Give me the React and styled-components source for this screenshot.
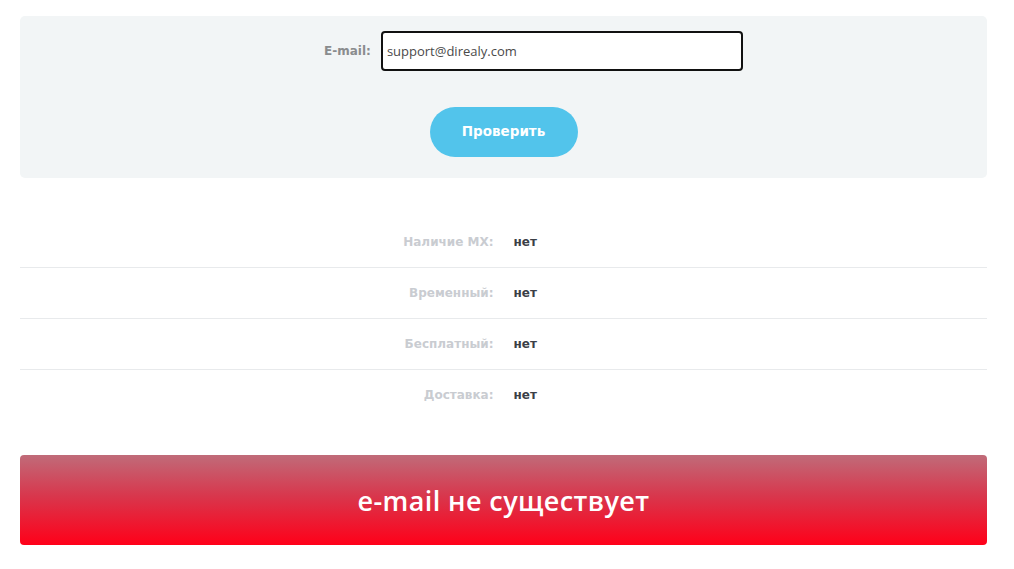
import React from "react";
import styled, { createGlobalStyle } from "styled-components";

const GlobalStyle = createGlobalStyle`
  html, body {
    margin: 0;
    padding: 0;
    background: #ffffff;
  }
  body {
    font-family: "Open Sans", "Liberation Sans", sans-serif;
  }
`;

const Page = styled.div`
  padding: 16px 27px 0 20px;
  display: flex;
  flex-direction: column;
`;

const CheckPanel = styled.form`
  background: #f2f5f6;
  border-radius: 5px;
  padding: 15px 0 21px;
  display: flex;
  flex-direction: column;
  align-items: center;
  gap: 36px;
`;

const Field = styled.label`
  display: flex;
  align-items: center;
  gap: 10px;
  margin-left: 60px;
  span {
    font-family: "DejaVu Sans", "Liberation Sans", sans-serif;
    font-size: 12px;
    font-weight: bold;
    color: #8a8c8e;
  }
  input {
    width: 362px;
    height: 40px;
    box-sizing: border-box;
    border: 2px solid #111;
    border-radius: 4px;
    background: #fff;
    padding: 0 4px;
    font-family: "Open Sans", "Liberation Sans", sans-serif;
    font-size: 13px;
    color: #4a4a4a;
    outline: none;
  }
`;

const CheckButton = styled.button`
  width: 148px;
  height: 50px;
  border: none;
  border-radius: 25px;
  background: #52c4eb;
  color: #fff;
  font-family: "DejaVu Sans", "Liberation Sans", sans-serif;
  font-size: 13.5px;
  font-weight: bold;
  padding: 0 0 2px;
  cursor: pointer;
`;

const Results = styled.div`
  margin-top: 39px;
  display: flex;
  flex-direction: column;
`;

const Row = styled.div`
  display: grid;
  grid-template-columns: 1fr 1fr;
  height: 50px;
  align-items: center;
  border-bottom: ${(p) => (p.last ? "none" : "1px solid #e8eaec")};
`;

const Label = styled.div`
  text-align: right;
  padding-right: 10px;
  font-family: "DejaVu Sans", "Liberation Sans", sans-serif;
  font-size: 12px;
  font-weight: bold;
  color: #c9ccd1;
`;

const Value = styled.div`
  padding-left: 10px;
  font-family: "DejaVu Sans", "Liberation Sans", sans-serif;
  font-size: 12px;
  font-weight: bold;
  color: #3b3f46;
`;

const Banner = styled.div`
  margin-top: 35px;
  height: 90px;
  border-radius: 4px;
  background: linear-gradient(to bottom, #c06b79 0%, #d8374d 45%, #ff0019 100%);
  display: flex;
  align-items: center;
  justify-content: center;
  color: #fff;
  font-family: "Open Sans", "Liberation Sans", sans-serif;
  font-size: 27px;
  font-weight: 600;
  letter-spacing: 0.4px;
`;

const rows = [
  { label: "Наличие MX:", value: "нет" },
  { label: "Временный:", value: "нет" },
  { label: "Бесплатный:", value: "нет" },
  { label: "Доставка:", value: "нет" },
];

const App = () => {
  return (
    <Page>
      <GlobalStyle />
      <CheckPanel onSubmit={(e) => e.preventDefault()}>
        <Field>
          <span>E-mail:</span>
          <input type="text" defaultValue="support@direaly.com" />
        </Field>
        <CheckButton type="submit">Проверить</CheckButton>
      </CheckPanel>
      <Results>
        {rows.map((r, i) => (
          <Row key={r.label} last={i === rows.length - 1}>
            <Label>{r.label}</Label>
            <Value>{r.value}</Value>
          </Row>
        ))}
      </Results>
      <Banner>e-mail не существует</Banner>
    </Page>
  );
};

export default App;
